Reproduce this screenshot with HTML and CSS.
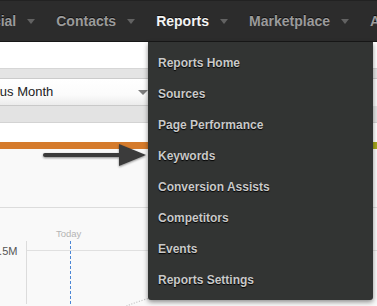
FILE: index.html
```html
<!DOCTYPE html>
<html>
<head>
<meta charset="utf-8">
<link rel="stylesheet" href="styles.css">
</head>
<body>
<div class="page">
  <nav class="nav">
    <div class="nav-item">Social<span class="caret"></span></div>
    <div class="nav-item">Contacts<span class="caret"></span></div>
    <div class="nav-item active">Reports<span class="caret"></span></div>
    <div class="nav-item">Marketplace<span class="caret"></span></div>
    <div class="nav-item">A</div>
  </nav>
  <div class="strip-white"></div>
  <div class="strip-gray"></div>
  <div class="select">
    <span class="select-text">Previous Month</span>
    <span class="select-caret"></span>
  </div>
  <div class="strip-gray2"></div>
  <div class="strip-white2"></div>
  <div class="band">
    <div class="band-orange"></div>
    <div class="band-green"></div>
  </div>
  <div class="area-top"></div>
  <div class="chart">
    <span class="today">Today</span>
    <span class="today-line"></span>
    <span class="ylabel">1.5M</span>
    <span class="axis"></span>
    <span class="grid"></span>
    <svg class="curve" width="30" height="12" viewBox="0 0 30 12">
      <path d="M2 11 Q14 6 28 2" fill="none" stroke="#c8c8c8" stroke-width="1.2" stroke-dasharray="1.2 1.5"/>
    </svg>
  </div>

  <svg class="arrow" width="110" height="30" viewBox="0 0 110 30">
    <defs>
      <filter id="sh" x="-10%" y="-30%" width="120%" height="160%">
        <feDropShadow dx="0" dy="1" stdDeviation="1" flood-color="#000" flood-opacity="0.45"/>
      </filter>
    </defs>
    <g filter="url(#sh)" fill="#3a3a3a">
      <rect x="3" y="13" width="80" height="4" rx="2"/>
      <polygon points="79,4 106,15 79,26"/>
    </g>
  </svg>

  <div class="dropdown">
    <div class="dd-item">Reports Home</div>
    <div class="dd-item">Sources</div>
    <div class="dd-item">Page Performance</div>
    <div class="dd-item">Keywords</div>
    <div class="dd-item">Conversion Assists</div>
    <div class="dd-item">Competitors</div>
    <div class="dd-item">Events</div>
    <div class="dd-item">Reports Settings</div>
  </div>
</div>
</body>
</html>
```

FILE: styles.css
```css
html, body {
  margin: 0;
  padding: 0;
}
body {
  width: 377px;
  height: 306px;
  overflow: hidden;
  background: #f9f9f9;
  font-family: "Liberation Sans", Arial, sans-serif;
}
.page {
  position: relative;
  width: 377px;
  height: 306px;
  overflow: hidden;
}
.nav {
  display: flex;
  align-items: center;
  height: 41px;
  background: #2c2c2c;
  border-top: 1px solid #222;
  border-bottom: 1px solid #181818;
  box-sizing: content-box;
  height: 40px;
  padding-left: 0;
  margin-left: -25px;
  width: 420px;
  white-space: nowrap;
}
.nav-item {
  display: flex;
  align-items: center;
  margin-right: 21px;
  font-size: 14px;
  font-weight: bold;
  color: #9b9b9b;
  text-shadow: 0 -1px 0 #111;
  line-height: 40px;
}
.nav-item.active {
  color: #f4f4f4;
}
.caret {
  display: inline-block;
  margin-left: 11px;
  margin-top: 1px;
  width: 0;
  height: 0;
  border-left: 4.5px solid transparent;
  border-right: 4.5px solid transparent;
  border-top: 5px solid #626262;
}
.strip-white {
  height: 26px;
  background: #fff;
  border-bottom: 1px solid #d6d6d6;
}
.strip-gray {
  height: 9px;
  background: #e4e4e4;
  border-bottom: 1px solid #cbcbcb;
}
.select {
  display: flex;
  align-items: center;
  justify-content: space-between;
  height: 26px;
  background: linear-gradient(#ffffff, #fbfbfb 60%, #ececec);
  border-bottom: 1px solid #c9c9c9;
  margin-left: -37px;
  width: 185px;
  padding-right: 5px;
}
.select-text {
  font-size: 13px;
  color: #222;
  line-height: 26px;
}
.select-caret {
  width: 0;
  height: 0;
  border-left: 5px solid transparent;
  border-right: 5px solid transparent;
  border-top: 5px solid #7d7d7d;
  margin-top: 1px;
}
.strip-gray2 {
  height: 16px;
  background: #e3e3e3;
  border-bottom: 1px solid #d3d3d3;
}
.strip-white2 {
  height: 19px;
  background: #fff;
}
.band {
  display: flex;
  height: 7px;
}
.band-orange {
  width: 300px;
  background: #d57b2c;
}
.band-green {
  flex: 1;
  background: #a3a61c;
}
.area-top {
  height: 58px;
  background: #f9f9f9;
  border-bottom: 1px solid #dcdcdc;
}
.chart {
  position: relative;
  height: 96px;
  background: #f9f9f9;
}
.today {
  position: absolute;
  left: 56px;
  top: 20px;
  font-size: 9.5px;
  color: #b4b4b4;
}
.today-line {
  position: absolute;
  left: 70px;
  top: 33px;
  bottom: 0;
  border-left: 1px dashed #4a86d6;
}
.ylabel {
  position: absolute;
  left: -7px;
  top: 37px;
  font-size: 11px;
  color: #555;
}
.axis {
  position: absolute;
  left: 26px;
  top: 33px;
  bottom: 0;
  border-left: 1px solid #dcdcdc;
}
.grid {
  position: absolute;
  left: 27px;
  right: 0;
  top: 42px;
  border-top: 1px solid #e0e0e0;
}
.curve {
  position: absolute;
  left: 122px;
  top: 88px;
}
.arrow {
  position: absolute;
  left: 40px;
  top: 140px;
}
.dropdown {
  position: absolute;
  left: 148px;
  top: 42px;
  width: 225px;
  height: 258px;
  box-sizing: border-box;
  padding: 6px 0 4px;
  background: #323433;
  border-radius: 0 0 3px 3px;
  box-shadow: 0 2px 5px rgba(0, 0, 0, 0.45);
}
.dd-item {
  height: 31px;
  line-height: 31px;
  padding-left: 10px;
  font-size: 12px;
  font-weight: bold;
  color: #c9c9c9;
  text-shadow: 0 1px 1px #000;
}
```
